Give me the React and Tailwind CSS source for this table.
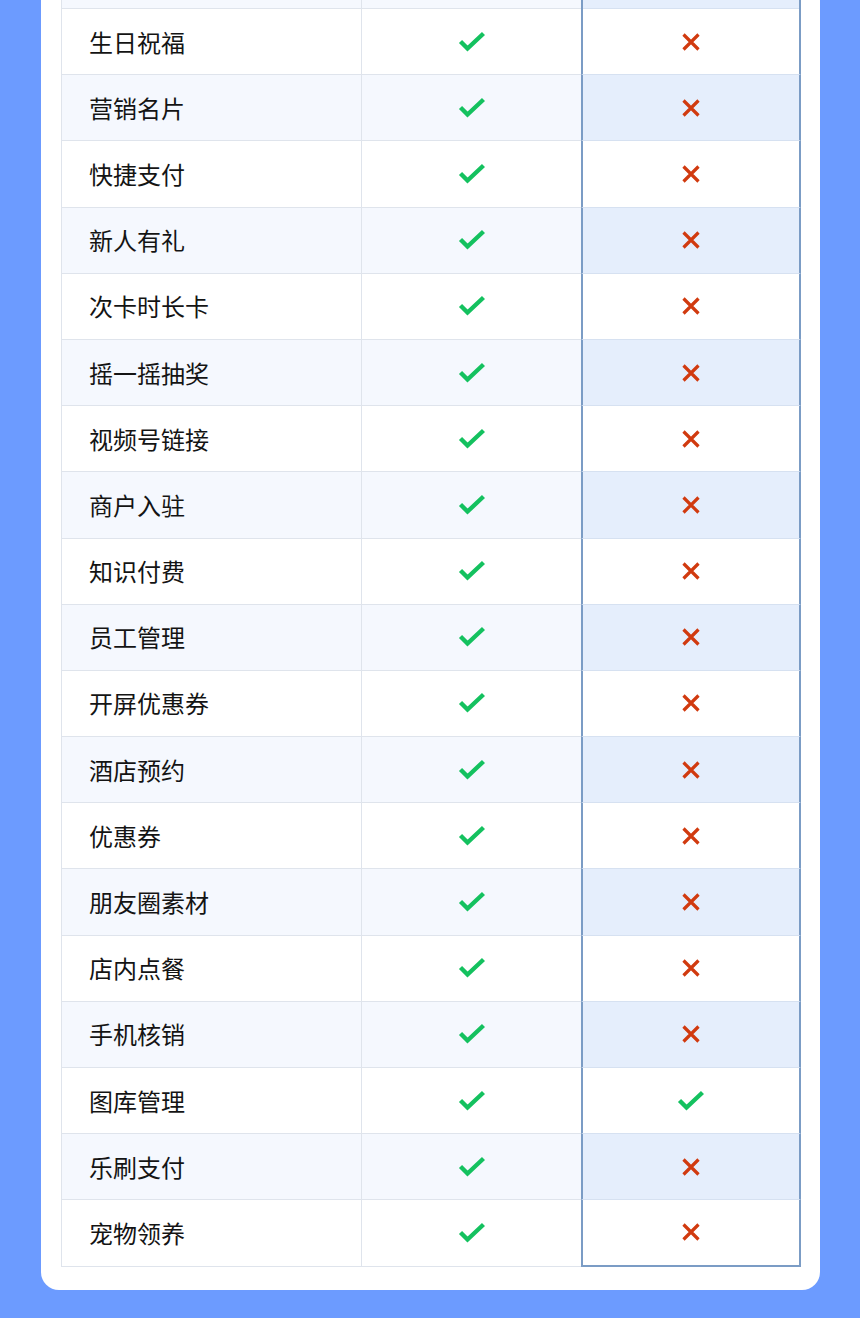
import React from "react";

const rows = [
  ["生日祝福", false],
  ["营销名片", false],
  ["快捷支付", false],
  ["新人有礼", false],
  ["次卡时长卡", false],
  ["摇一摇抽奖", false],
  ["视频号链接", false],
  ["商户入驻", false],
  ["知识付费", false],
  ["员工管理", false],
  ["开屏优惠券", false],
  ["酒店预约", false],
  ["优惠券", false],
  ["朋友圈素材", false],
  ["店内点餐", false],
  ["手机核销", false],
  ["图库管理", true],
  ["乐刷支付", false],
  ["宠物领养", false],
];

function Check() {
  return (
    <svg width="28" height="22" viewBox="0 0 28 22" fill="none">
      <path d="M2.5 10.5 L9.5 17.5 L25.5 2.5" stroke="#14c15f" strokeWidth="4.4" strokeLinejoin="miter" />
    </svg>
  );
}

function Cross() {
  return (
    <svg width="20" height="20" viewBox="0 0 20 20" fill="none">
      <path d="M2.5 2.5 L17.5 17.5 M17.5 2.5 L2.5 17.5" stroke="#d13a0f" strokeWidth="3.2" />
    </svg>
  );
}

export default function App() {
  return (
    <div
      className="w-[860px] h-[1318px] bg-[#6c9bff] pl-[41px] overflow-hidden"
      style={{ fontFamily: '"Noto Sans CJK SC", "Noto Sans", sans-serif' }}
    >
      <div className="w-[779px] bg-white rounded-b-[18px] pl-[20px] pr-[19px] pb-[23px]">
        {/* partial row at the top */}
        <div className="flex h-[9px]">
          <div className="w-[301px] border-l border-r border-b border-[#dfe4ec] bg-[#f5f8fe]" />
          <div className="w-[219px] border-b border-[#dfe4ec] bg-[#f5f8fe]" />
          <div className="flex-1 border-l-2 border-r-2 border-[#7b9cc5] bg-[#e5eefc] relative">
            <div className="absolute left-0 right-0 bottom-0 h-px bg-[#d6e1f1]" />
          </div>
        </div>
        {rows.map(([name, ok], i) => {
          const shaded = i % 2 === 1;
          const last = i === rows.length - 1;
          return (
            <div key={name} className="flex h-[66.2px]">
              <div
                className={`w-[301px] border-l border-r border-b border-[#dfe4ec] flex items-center pl-[27px] text-[24px] text-[#141414] ${
                  shaded ? "bg-[#f5f8fe]" : "bg-white"
                }`}
              >
                {name}
              </div>
              <div
                className={`w-[219px] border-b border-[#dfe4ec] flex items-center justify-center ${
                  shaded ? "bg-[#f5f8fe]" : "bg-white"
                }`}
              >
                <Check />
              </div>
              <div
                className={`flex-1 border-l-2 border-r-2 border-[#7b9cc5] flex items-center justify-center ${
                  last ? "border-b-2" : "border-b border-b-[#d6e1f1]"
                } ${shaded ? "bg-[#e5eefc]" : "bg-white"}`}
              >
                {ok ? <Check /> : <Cross />}
              </div>
            </div>
          );
        })}
      </div>
    </div>
  );
}
